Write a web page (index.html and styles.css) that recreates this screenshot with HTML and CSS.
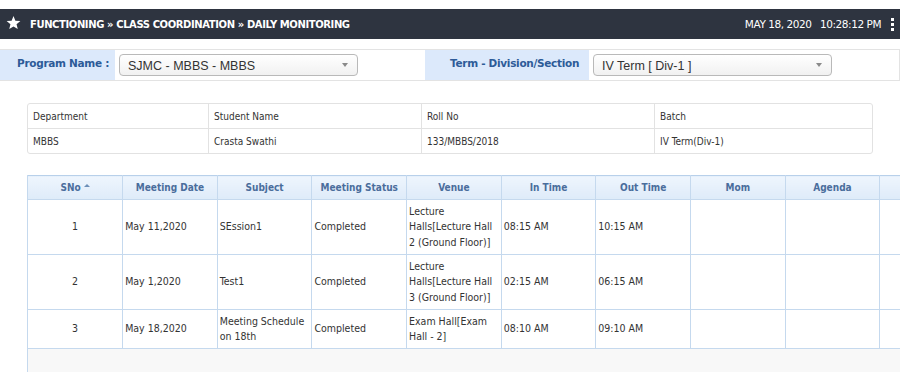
FILE: index.html
```html
<!DOCTYPE html>
<html lang="en">
<head>
    <meta charset="UTF-8">
    <title>Daily Monitoring</title>
    <link rel="stylesheet" href="styles.css">
</head>
<body>
    <!-- Breadcrumb bar -->
    <div class="topbar">
        <div class="crumbs">
            <svg class="star" width="15" height="14" viewBox="0 0 24 23"><path d="M12 0l3.1 7.6 8.2.6-6.3 5.3 2 8L12 17.1 5 21.5l2-8L.7 8.2l8.2-.6z" fill="#fff"/></svg>
            <span>FUNCTIONING &raquo; CLASS COORDINATION &raquo; DAILY MONITORING</span>
        </div>
        <div class="clock">
            <span>MAY 18, 2020&nbsp;&nbsp;&nbsp;10:28:12 PM</span>
            <span class="kebab"><i></i><i></i><i></i></span>
        </div>
    </div>

    <!-- Filters -->
    <div class="filters">
        <div class="label first">Program Name :</div>
        <div class="field">
            <div class="select wide">SJMC - MBBS - MBBS<span class="arrow"></span></div>
        </div>
        <div class="label second">Term - Division/Section</div>
        <div class="field">
            <div class="select">IV Term [ Div-1 ]<span class="arrow"></span></div>
        </div>
    </div>

    <!-- Student info -->
    <table class="info">
        <tr>
            <td class="c1">Department</td>
            <td class="c2">Student Name</td>
            <td class="c3">Roll No</td>
            <td>Batch</td>
        </tr>
        <tr>
            <td>MBBS</td>
            <td>Crasta Swathi</td>
            <td>133/MBBS/2018</td>
            <td>IV Term(Div-1)</td>
        </tr>
    </table>

    <!-- Meetings grid -->
    <div class="grid">
        <table>
            <thead>
                <tr>
                    <th>SNo <span class="sort"></span></th>
                    <th>Meeting Date</th>
                    <th>Subject</th>
                    <th>Meeting Status</th>
                    <th>Venue</th>
                    <th>In Time</th>
                    <th>Out Time</th>
                    <th>Mom</th>
                    <th>Agenda</th>
                    <th></th>
                </tr>
            </thead>
            <tbody>
                <tr class="tall">
                    <td class="num">1</td>
                    <td>May 11,2020</td>
                    <td>SEssion1</td>
                    <td>Completed</td>
                    <td>Lecture Halls[Lecture Hall 2 (Ground Floor)]</td>
                    <td>08:15 AM</td>
                    <td>10:15 AM</td>
                    <td></td><td></td><td></td>
                </tr>
                <tr class="tall">
                    <td class="num">2</td>
                    <td>May 1,2020</td>
                    <td>Test1</td>
                    <td>Completed</td>
                    <td>Lecture Halls[Lecture Hall 3 (Ground Floor)]</td>
                    <td>02:15 AM</td>
                    <td>06:15 AM</td>
                    <td></td><td></td><td></td>
                </tr>
                <tr class="short">
                    <td class="num">3</td>
                    <td>May 18,2020</td>
                    <td>Meeting Schedule on 18th</td>
                    <td>Completed</td>
                    <td>Exam Hall[Exam Hall - 2]</td>
                    <td>08:10 AM</td>
                    <td>09:10 AM</td>
                    <td></td><td></td><td></td>
                </tr>
            </tbody>
        </table>
        <div class="grid-foot"></div>
    </div>
</body>
</html>
```

FILE: styles.css
```css
body, html {
    margin: 0;
    padding: 0;
    background-color: #ffffff;
    overflow: hidden;
}

body {
    width: 900px;
    font-family: "DejaVu Sans", sans-serif;
}

/* Breadcrumb bar */
.topbar {
    margin-top: 9px;
    height: 30px;
    background-color: #2e3440;
    color: #ffffff;
    display: flex;
    align-items: center;
    justify-content: space-between;
    padding: 0 6px 0 6px;
}

.crumbs {
    display: flex;
    align-items: center;
    gap: 9px;
    font-weight: bold;
    font-size: 10px;
    letter-spacing: -0.4px;
}

.star {
    margin-top: -2px;
}

.clock {
    display: flex;
    align-items: center;
    gap: 10px;
    font-size: 10.5px;
    letter-spacing: -0.45px;
}

.kebab {
    display: flex;
    flex-direction: column;
    gap: 2px;
}

.kebab i {
    display: block;
    width: 3px;
    height: 3px;
    background-color: #ffffff;
}

/* Filters */
.filters {
    margin-top: 10px;
    height: 30px;
    border: 1px solid #e3e3e3;
    border-left: none;
    display: flex;
}

.label {
    background-color: #dce9fb;
    color: #2d5b98;
    font-weight: bold;
    font-size: 10.5px;
    letter-spacing: -0.3px;
    padding-top: 7px;
    box-sizing: border-box;
}

.label.first {
    width: 115px;
    padding-left: 17px;
}

.label.second {
    width: 164px;
    padding-left: 25px;
}

.field {
    display: flex;
    align-items: center;
    padding-left: 4px;
}

.field:nth-child(2) {
    width: 306px;
}

.select {
    position: relative;
    width: 239px;
    height: 22px;
    box-sizing: border-box;
    border: 1px solid #b9b9b9;
    border-radius: 4px;
    background: linear-gradient(#ffffff, #f1f1f1);
    font-family: "Liberation Sans", Arial, sans-serif;
    font-size: 12.5px;
    color: #333333;
    padding: 4px 0 0 8px;
}

.arrow {
    position: absolute;
    right: 9px;
    top: 8px;
    border-left: 3px solid transparent;
    border-right: 3px solid transparent;
    border-top: 4px solid #8a8a8a;
}

/* Student info */
.info {
    margin: 22px 0 0 27px;
    width: 846px;
    border-collapse: separate;
    border-spacing: 0;
    border: 1px solid #e2e2e2;
    border-radius: 3px;
    font-family: "DejaVu Sans Condensed", "DejaVu Sans", sans-serif;
    font-size: 10px;
    color: #333333;
}

.info td {
    height: 24px;
    padding: 0 0 0 5px;
    border-left: 1px solid #e2e2e2;
}

.info td:first-child {
    border-left: none;
}

.info tr:first-child td {
    border-bottom: 1px solid #e2e2e2;
}

.info .c1 { width: 175px; }
.info .c2 { width: 207px; }
.info .c3 { width: 227px; }

/* Meetings grid */
.grid {
    margin: 21px 0 0 27px;
    width: 947px;
    border-left: 1px solid #c5d9ee;
    background-color: #f8f8f8;
}

.grid table {
    border-collapse: collapse;
    table-layout: fixed;
    width: 100%;
    font-family: "DejaVu Sans Condensed", "DejaVu Sans", sans-serif;
    font-size: 10.5px;
    color: #333333;
    background-color: #ffffff;
}

.grid th {
    height: 23px;
    background: linear-gradient(#eef5fd, #deebf9);
    color: #4a6d9c;
    font-weight: bold;
    font-size: 10px;
    border: 1px solid #c5d9ee;
    border-top-color: #b8d0ea;
    text-align: center;
    padding: 0;
}

.grid th:first-child {
    border-left: none;
}

.sort {
    display: inline-block;
    vertical-align: 4px;
    border-left: 3px solid transparent;
    border-right: 3px solid transparent;
    border-bottom: 3px solid #6d8fb8;
}

.grid td {
    border: 1px solid #c5d9ee;
    padding: 0 2px;
    line-height: 15.5px;
    vertical-align: middle;
}

.grid td:first-child {
    border-left: none;
}

.grid td.num {
    text-align: center;
}

.grid tr.tall td {
    height: 54px;
}

.grid tr.short td {
    height: 38px;
}

.grid-foot {
    height: 30px;
}
```
